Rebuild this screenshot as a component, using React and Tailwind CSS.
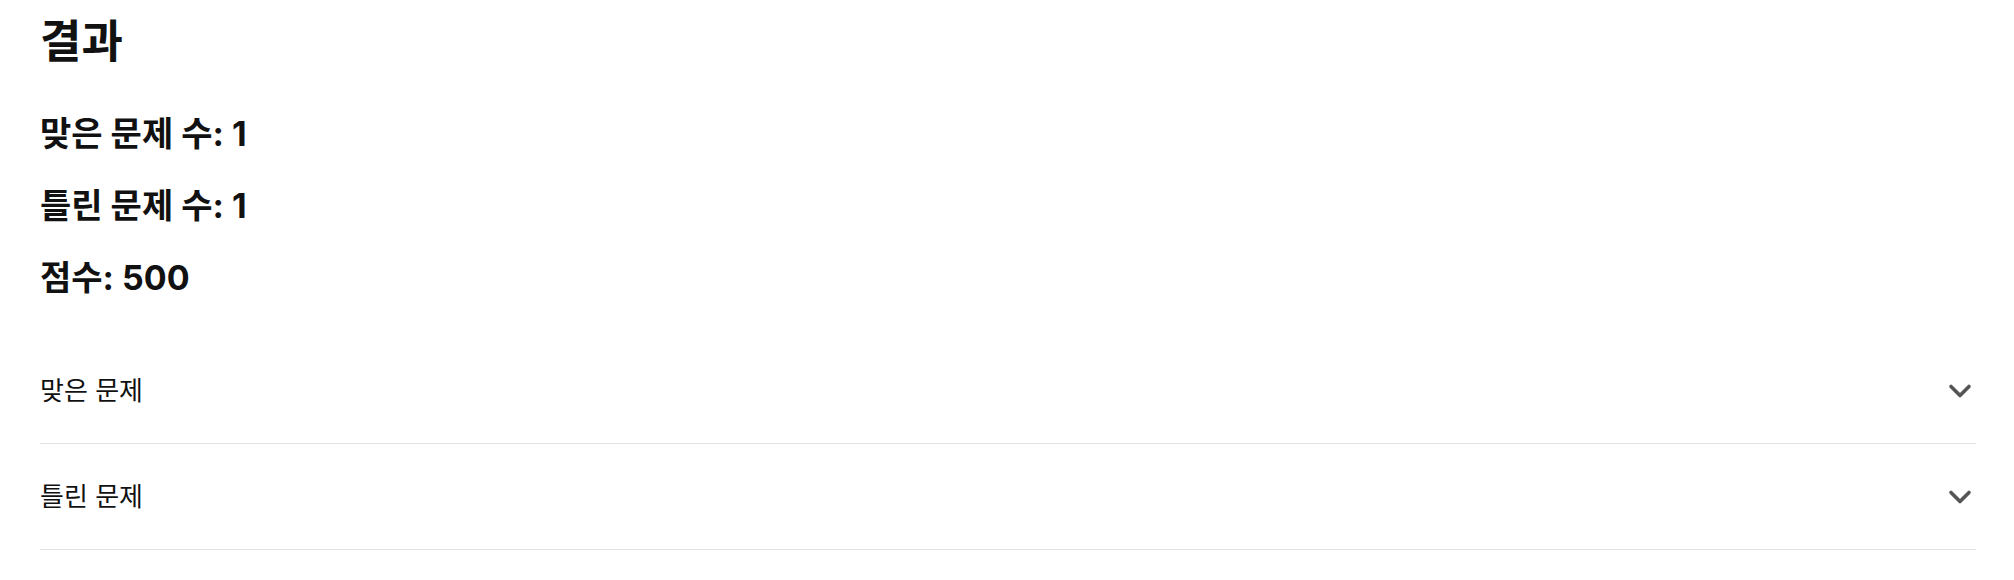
import { ChevronDown } from 'lucide-react';

const font = { fontFamily: '"Inter", "Noto Sans CJK KR", sans-serif' };

function AccordionItem({ title }) {
  return (
    <div className="flex h-[106px] items-center justify-between border-b border-[#e3e3e3]">
      <span className="text-[26px] font-normal text-[#111]">{title}</span>
      <ChevronDown className="mr-[-2px] h-[36px] w-[36px] text-[#555]" strokeWidth={2.4} />
    </div>
  );
}

export default function App() {
  return (
    <div className="min-h-[580px] bg-white pl-[40px] pr-[38px] pt-[12px] text-[#111]" style={font}>
      <h1 className="text-[45px] font-bold leading-[60px]">결과</h1>

      <div className="mt-[26px]">
        <h2 className="text-[34px] font-bold leading-[72px]">맞은 문제 수: 1</h2>
        <h2 className="text-[34px] font-bold leading-[72px]">틀린 문제 수: 1</h2>
        <h2 className="text-[34px] font-bold leading-[72px]">점수: 500</h2>
      </div>

      <div className="mt-[24px]">
        <AccordionItem title="맞은 문제" />
        <AccordionItem title="틀린 문제" />
      </div>
    </div>
  );
}
